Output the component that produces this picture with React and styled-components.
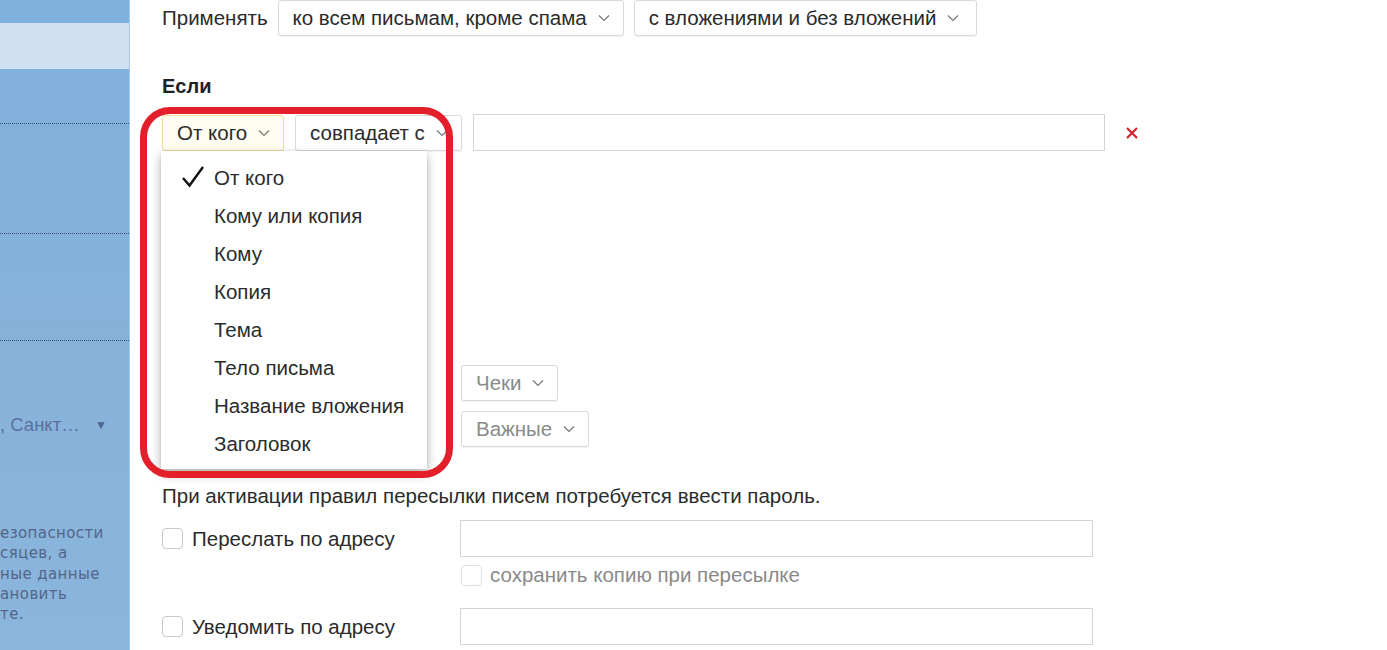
import React from "react";
import styled, { createGlobalStyle } from "styled-components";

const Global = createGlobalStyle`
  html, body { margin: 0; padding: 0; background: #fff; }
  body { font-family: "Liberation Sans", Arial, sans-serif; color: #222; }
  * { box-sizing: border-box; }
`;

const Page = styled.div`
  display: flex;
  width: 1387px;
  height: 650px;
  overflow: hidden;
`;

const Sidebar = styled.aside`
  width: 130px;
  flex: none;
  background: linear-gradient(180deg, #80b0dd 0%, #86b2da 50%, #8ab5dc 100%);
  display: flex;
  flex-direction: column;
  overflow: hidden;
  border-right: 1px solid #a9c8e6;
`;

const SideBar = styled.div`
  margin-top: 23px;
  height: 46px;
  background: #cfe1f1;
`;

const Dotted = styled.div`
  margin-top: ${(p) => p.$top}px;
  border-top: 1px dotted #3a4d66;
  height: 0;
`;

const CityRow = styled.div`
  margin-top: 72px;
  display: flex;
  align-items: center;
  justify-content: space-between;
  padding: 0 22px 0 0;
  font-size: 18.5px;
  color: #5b6f9f;
  white-space: nowrap;
  height: 24px;
`;

const Tri = styled.span`
  font-size: 12px;
  color: #4f6592;
`;

const SideNote = styled.div`
  margin-top: 86px;
  font-family: "DejaVu Sans", Verdana, sans-serif;
  font-size: 15px;
  line-height: 20.3px;
  color: #536687;
  white-space: nowrap;
  letter-spacing: 0.4px;
`;

const Main = styled.main`
  flex: 1;
  position: relative;
  padding-left: 32px;
  display: flex;
  flex-direction: column;
`;

const Row = styled.div`
  display: flex;
  align-items: center;
  margin-top: ${(p) => p.$mt || 0}px;
  gap: ${(p) => p.$gap || 0}px;
`;

const Label = styled.span`
  font-size: 20.5px;
  color: #2b2b2b;
  margin-right: 10px;
`;

const Heading = styled.div`
  margin-top: 38px;
  font-size: 20px;
  font-weight: bold;
  line-height: 24px;
  color: #222;
`;

const SelectBtn = styled.div`
  display: inline-flex;
  align-items: center;
  height: 36px;
  margin-left: ${(p) => p.$ml || 0}px;
  padding: 0 ${(p) => p.$pr || 13}px 0 14px;
  gap: 11px;
  border: 1px solid ${(p) => (p.$active ? "#f0dc9a" : "#d9d9d9")};
  background: ${(p) => (p.$active ? "#fffdf2" : "#fff")};
  border-radius: 3px;
  box-shadow: 0 1px 1px rgba(0, 0, 0, 0.06);
  font-size: 20.5px;
  color: ${(p) => (p.$muted ? "#8a8a8a" : "#2b2b2b")};
  white-space: nowrap;
  flex: none;
`;

const TextInput = styled.div`
  height: 37px;
  width: ${(p) => p.$w}px;
  border: 1px solid #d4d4d4;
  background: #fff;
  flex: none;
`;

const Remove = styled.div`
  margin-left: 10px;
  display: flex;
`;

const Anchor = styled.div`
  position: relative;
  display: flex;
`;

const Menu = styled.div`
  position: absolute;
  top: 36px;
  left: -1px;
  width: 266px;
  background: #fff;
  box-shadow: 0 5px 10px rgba(0, 0, 0, 0.3), 0 0 2px rgba(0, 0, 0, 0.12);
  padding: 8px 0 6px;
  z-index: 5;
  display: flex;
  flex-direction: column;
`;

const MenuItem = styled.div`
  height: 38px;
  display: flex;
  align-items: center;
  padding-left: 53px;
  position: relative;
  font-size: 20.5px;
  color: #2b2b2b;
  white-space: nowrap;
`;

const Check = styled.svg`
  position: absolute;
  left: 20px;
  top: 6px;
`;

const Highlight = styled.div`
  position: absolute;
  left: 10px;
  top: 107px;
  width: 313px;
  height: 371px;
  border: 7px solid #e21f2b;
  border-radius: 30px;
  z-index: 6;
  pointer-events: none;
`;

const Spacer = styled.span`
  width: 299px;
  flex: none;
`;

const Notice = styled.div`
  margin-top: 37px;
  font-size: 20.5px;
  line-height: 24px;
  color: #2b2b2b;
`;

const Box = styled.span`
  width: 21px;
  height: 21px;
  border: 1px solid ${(p) => (p.$muted ? "#e0e0e0" : "#c9c9c9")};
  border-radius: 4px;
  background: #fff;
  flex: none;
`;

const CheckLabel = styled.label`
  width: 298px;
  flex: none;
  display: flex;
  align-items: center;
  gap: 9px;
  font-size: 20.5px;
  color: #2b2b2b;
`;

const SubCheck = styled.div`
  display: flex;
  align-items: center;
  gap: 8px;
  margin-left: 299px;
  margin-top: 7px;
  height: 22px;
  font-size: 20.5px;
  color: #8a8a8a;
`;

const Chevron = () => (
  <svg width="12" height="8" viewBox="0 0 12 8">
    <path d="M1 1.5 L6 6.5 L11 1.5" fill="none" stroke="#777" strokeWidth="1.2" />
  </svg>
);

const items = [
  "От кого",
  "Кому или копия",
  "Кому",
  "Копия",
  "Тема",
  "Тело письма",
  "Название вложения",
  "Заголовок",
];

export default function App() {
  return (
    <>
      <Global />
      <Page>
        <Sidebar>
          <SideBar />
          <Dotted $top={54} />
          <Dotted $top={109} />
          <Dotted $top={106} />
          <CityRow>
            <span>, Санкт…</span>
            <Tri>▼</Tri>
          </CityRow>
          <SideNote>
            езопасности
            <br />
            сяцев, а
            <br />
            ные данные
            <br />
            ановить
            <br />
            те.
          </SideNote>
        </Sidebar>
        <Main>
          <Row>
            <Label>Применять</Label>
            <SelectBtn>
              ко всем письмам, кроме спама <Chevron />
            </SelectBtn>
            <SelectBtn $ml={10} $pr={17}>
              с вложениями и без вложений <Chevron />
            </SelectBtn>
          </Row>
          <Heading>Если</Heading>
          <Row $mt={16} $gap={11}>
            <Anchor>
              <SelectBtn $active>
                От кого <Chevron />
              </SelectBtn>
              <Menu>
                {items.map((t, i) => (
                  <MenuItem key={t}>
                    {i === 0 && (
                      <Check width="24" height="24" viewBox="0 0 24 24">
                        <path d="M2 13 L8.5 20.5 L22 2" fill="none" stroke="#111" strokeWidth="2.4" />
                      </Check>
                    )}
                    {t}
                  </MenuItem>
                ))}
              </Menu>
            </Anchor>
            <SelectBtn>
              совпадает с <Chevron />
            </SelectBtn>
            <TextInput $w={632} />
            <Remove>
              <svg width="12" height="12" viewBox="0 0 12 12">
                <path d="M1 1 L11 11 M11 1 L1 11" stroke="#d9232b" strokeWidth="2.2" />
              </svg>
            </Remove>
          </Row>
          <Row $mt={214}>
            <Spacer />
            <SelectBtn $muted>
              Чеки <Chevron />
            </SelectBtn>
          </Row>
          <Row $mt={10}>
            <Spacer />
            <SelectBtn $muted>
              Важные <Chevron />
            </SelectBtn>
          </Row>
          <Notice>При активации правил пересылки писем потребуется ввести пароль.</Notice>
          <Row $mt={12}>
            <CheckLabel>
              <Box />
              Переслать по адресу
            </CheckLabel>
            <TextInput $w={633} />
          </Row>
          <SubCheck>
            <Box $muted />
            сохранить копию при пересылке
          </SubCheck>
          <Row $mt={22}>
            <CheckLabel>
              <Box />
              Уведомить по адресу
            </CheckLabel>
            <TextInput $w={633} />
          </Row>
          <Highlight />
        </Main>
      </Page>
    </>
  );
}
